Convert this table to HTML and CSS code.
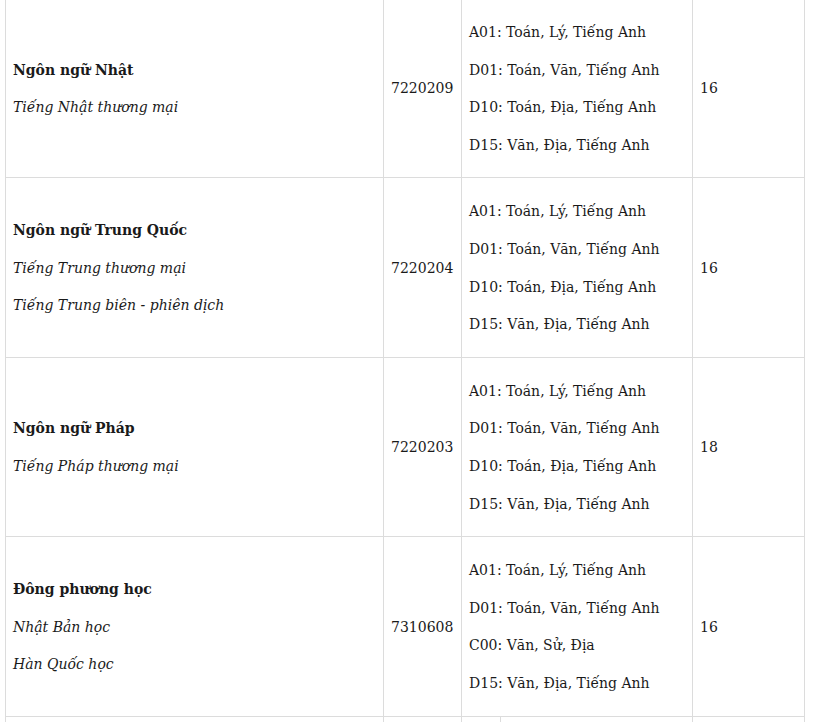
FILE: index.html
```html
<!DOCTYPE html>
<html lang="vi">
<head>
<meta charset="utf-8">
<link rel="stylesheet" href="styles.css">
</head>
<body>
<table class="majors">
  <colgroup>
    <col class="c-name">
    <col class="c-code">
    <col class="c-combo-a">
    <col class="c-combo-b">
    <col class="c-score">
  </colgroup>
  <tbody>
    <tr>
      <td>
        <p class="major">Ngôn ngữ Nhật</p>
        <p class="spec">Tiếng Nhật thương mại</p>
      </td>
      <td>7220209</td>
      <td colspan="2">
        <p>A01: Toán, Lý, Tiếng Anh</p>
        <p>D01: Toán, Văn, Tiếng Anh</p>
        <p>D10: Toán, Địa, Tiếng Anh</p>
        <p>D15: Văn, Địa, Tiếng Anh</p>
      </td>
      <td>16</td>
    </tr>
    <tr>
      <td>
        <p class="major">Ngôn ngữ Trung Quốc</p>
        <p class="spec">Tiếng Trung thương mại</p>
        <p class="spec">Tiếng Trung biên - phiên dịch</p>
      </td>
      <td>7220204</td>
      <td colspan="2">
        <p>A01: Toán, Lý, Tiếng Anh</p>
        <p>D01: Toán, Văn, Tiếng Anh</p>
        <p>D10: Toán, Địa, Tiếng Anh</p>
        <p>D15: Văn, Địa, Tiếng Anh</p>
      </td>
      <td>16</td>
    </tr>
    <tr>
      <td>
        <p class="major">Ngôn ngữ Pháp</p>
        <p class="spec">Tiếng Pháp thương mại</p>
      </td>
      <td>7220203</td>
      <td colspan="2">
        <p>A01: Toán, Lý, Tiếng Anh</p>
        <p>D01: Toán, Văn, Tiếng Anh</p>
        <p>D10: Toán, Địa, Tiếng Anh</p>
        <p>D15: Văn, Địa, Tiếng Anh</p>
      </td>
      <td>18</td>
    </tr>
    <tr>
      <td>
        <p class="major">Đông phương học</p>
        <p class="spec">Nhật Bản học</p>
        <p class="spec">Hàn Quốc học</p>
      </td>
      <td>7310608</td>
      <td colspan="2">
        <p>A01: Toán, Lý, Tiếng Anh</p>
        <p>D01: Toán, Văn, Tiếng Anh</p>
        <p>C00: Văn, Sử, Địa</p>
        <p>D15: Văn, Địa, Tiếng Anh</p>
      </td>
      <td>16</td>
    </tr>
    <tr class="next">
      <td></td>
      <td></td>
      <td></td>
      <td></td>
      <td></td>
    </tr>
  </tbody>
</table>
</body>
</html>
```
FILE: styles.css
```css
html, body {
  margin: 0;
  padding: 0;
  background: #fff;
}

body {
  padding-left: 5px;
  overflow: hidden;
  height: 722px;
}

.majors {
  margin-top: -2px;
  border-collapse: collapse;
  table-layout: fixed;
  width: 800px;
  font-family: "DejaVu Serif", "Liberation Serif", serif;
  font-size: 14px;
  line-height: 22.6px;
  color: #1a1a1a;
}

.c-name { width: 378px; }
.c-code { width: 78px; }
.c-combo-a { width: 39px; }
.c-combo-b { width: 192px; }
.c-score { width: 112px; }

.majors td {
  border: 1px solid #dcdcdc;
  padding: 22px 7px 21px 7px;
  vertical-align: middle;
  text-align: left;
}

.majors p {
  margin: 0;
}

.majors p + p {
  margin-top: 15px;
}

.major {
  font-weight: bold;
}

.spec {
  font-style: italic;
}

.majors .next td {
  height: 6px;
  padding: 0;
  border-bottom-style: hidden;
}
```
